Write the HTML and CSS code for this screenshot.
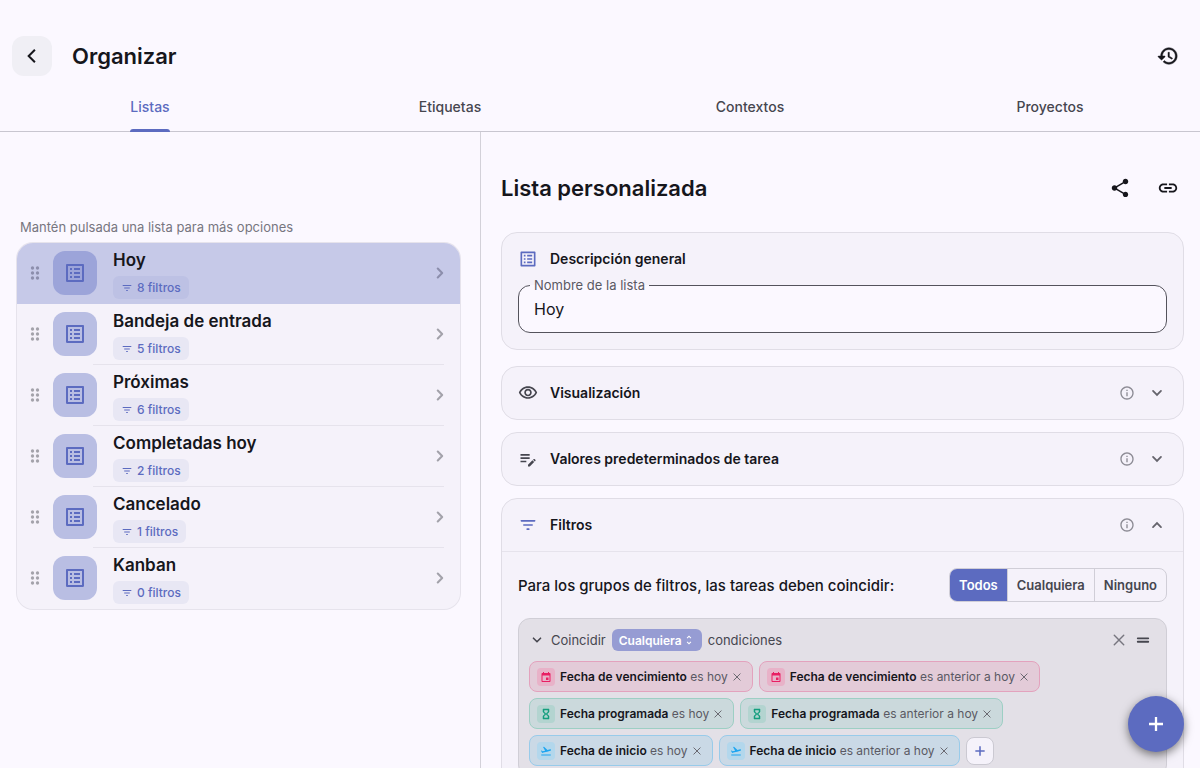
FILE: index.html
```html
<!DOCTYPE html>
<html lang="es">
<head>
    <meta charset="UTF-8">
    <meta name="viewport" content="width=device-width, initial-scale=1.0">
    <title>Organizar</title>
    <link rel="stylesheet" href="styles.css">
</head>
<body>
    <svg class="sprite" aria-hidden="true">
        <symbol id="i-back" viewBox="0 0 24 24"><path d="M15.500 4.500L8 12l7.500 7.500" fill="none" stroke="currentColor" stroke-width="2.400"/></symbol>
        <symbol id="i-history" viewBox="0 0 24 24"><path stroke="currentColor" stroke-width=".500" d="M13 3c-4.970 0-9 4.030-9 9H1.800c-.600 0-.900.600-.500 1l3.300 3.200c.250.250.600.250.800 0L8.700 13c.400-.400.100-1-.400-1H6c0-3.870 3.130-7 7-7s7 3.130 7 7-3.130 7-7 7c-1.930 0-3.680-.790-4.940-2.060l-1.420 1.420C8.270 19.990 10.510 21 13 21c4.970 0 9-4.030 9-9s-4.030-9-9-9zm-1 5v5l4.280 2.540.720-1.210-3.500-2.080V8H12z"/></symbol>
        <symbol id="i-list" viewBox="0 0 24 24"><path d="M11 7h6v2h-6zm0 4h6v2h-6zm0 4h6v2h-6zM7 7h2v2H7zm0 4h2v2H7zm0 4h2v2H7zM20.100 3H3.900c-.500 0-.900.400-.900.900v16.200c0 .400.400.900.900.900h16.200c.400 0 .900-.500.900-.900V3.900c0-.500-.500-.900-.900-.900zM19 19H5V5h14v14z"/></symbol>
        <symbol id="i-drag" viewBox="0 0 24 24"><circle cx="9" cy="6" r="2"/><circle cx="15" cy="6" r="2"/><circle cx="9" cy="12" r="2"/><circle cx="15" cy="12" r="2"/><circle cx="9" cy="18" r="2"/><circle cx="15" cy="18" r="2"/></symbol>
        <symbol id="i-filter" viewBox="0 0 24 24"><path d="M11 18h2c.550 0 1-.450 1-1s-.450-1-1-1h-2c-.550 0-1 .450-1 1s.450 1 1 1zM3 7c0 .550.450 1 1 1h16c.550 0 1-.450 1-1s-.450-1-1-1H4c-.550 0-1 .450-1 1zm4 6h10c.550 0 1-.450 1-1s-.450-1-1-1H7c-.550 0-1 .450-1 1s.450 1 1 1z"/></symbol>
        <symbol id="i-next" viewBox="0 0 24 24"><path d="M9.300 6.700L14.600 12l-5.300 5.300" fill="none" stroke="currentColor" stroke-width="2.500" stroke-linecap="round" stroke-linejoin="round"/></symbol>
        <symbol id="i-share" viewBox="0 0 24 24"><path d="M18 16.080c-.760 0-1.440.300-1.960.770L8.910 12.700c.050-.230.090-.460.090-.700s-.040-.470-.090-.700l7.050-4.110c.540.500 1.250.810 2.040.810 1.660 0 3-1.340 3-3s-1.340-3-3-3-3 1.340-3 3c0 .240.040.470.090.700L8.040 9.810C7.500 9.310 6.790 9 6 9c-1.660 0-3 1.340-3 3s1.340 3 3 3c.790 0 1.500-.310 2.040-.810l7.120 4.160c-.050.210-.080.430-.080.650 0 1.610 1.310 2.920 2.920 2.920s2.920-1.310 2.920-2.920-1.310-2.920-2.920-2.920z"/></symbol>
        <symbol id="i-link" viewBox="0 0 24 24"><path d="M3.900 12c0-1.710 1.390-3.100 3.100-3.100h4V7H7c-2.760 0-5 2.240-5 5s2.240 5 5 5h4v-1.900H7c-1.710 0-3.100-1.390-3.100-3.100zM8 13h8v-2H8v2zm9-6h-4v1.900h4c1.710 0 3.100 1.390 3.100 3.100s-1.390 3.100-3.100 3.100h-4V17h4c2.760 0 5-2.240 5-5s-2.240-5-5-5z"/></symbol>
        <symbol id="i-eye" viewBox="0 0 24 24"><path d="M12 6c3.790 0 7.170 2.130 8.820 5.500C19.170 14.870 15.790 17 12 17s-7.170-2.130-8.820-5.500C4.830 8.130 8.210 6 12 6m0-2C7 4 2.730 7.110 1 11.500 2.730 15.890 7 19 12 19s9.270-3.110 11-7.500C21.270 7.110 17 4 12 4zm0 5c1.380 0 2.500 1.120 2.500 2.500S13.380 14 12 14s-2.500-1.120-2.500-2.500S10.620 9 12 9m0-2c-2.480 0-4.500 2.020-4.500 4.500S9.520 16 12 16s4.500-2.020 4.500-4.500S14.480 7 12 7z"/></symbol>
        <symbol id="i-note" viewBox="0 0 24 24"><path d="M3 10h11v2H3v-2zm0-2h11V6H3v2zm0 8h7v-2H3v2zm15.010-3.130.710-.710c.390-.390 1.020-.390 1.410 0l.710.710c.390.390.390 1.020 0 1.410l-.710.710-2.120-2.120zm-.710.710-5.300 5.300V21h2.120l5.300-5.300-2.120-2.120z"/></symbol>
        <symbol id="i-info" viewBox="0 0 24 24"><path d="M11 7h2v2h-2zm0 4h2v6h-2zm1-9C6.480 2 2 6.480 2 12s4.480 10 10 10 10-4.480 10-10S17.520 2 12 2zm0 18c-4.410 0-8-3.590-8-8s3.590-8 8-8 8 3.590 8 8-3.590 8-8 8z"/></symbol>
        <symbol id="i-down" viewBox="0 0 24 24"><path d="M6.700 9.300l5.300 5.300 5.300-5.300" fill="none" stroke="currentColor" stroke-width="2.400" stroke-linecap="round"/></symbol>
        <symbol id="i-up" viewBox="0 0 24 24"><path d="M6.700 14.700L12 9.400l5.300 5.300" fill="none" stroke="currentColor" stroke-width="2.400" stroke-linecap="round"/></symbol>
        <symbol id="i-unfold" viewBox="0 0 24 24"><path d="M12 5.830 15.170 9l1.410-1.410L12 3 7.410 7.590 8.830 9 12 5.830zm0 12.340L8.830 15l-1.410 1.410L12 21l4.590-4.590L15.170 15 12 18.170z"/></symbol>
        <symbol id="i-close" viewBox="0 0 24 24"><path d="M5.700 5.700l12.600 12.600M18.300 5.700L5.700 18.300" fill="none" stroke="currentColor" stroke-width="1.900" stroke-linecap="round"/></symbol>
        <symbol id="i-handle" viewBox="0 0 24 24"><path d="M5 9.700h14M5 14.300h14" fill="none" stroke="currentColor" stroke-width="2.400" stroke-linecap="round"/></symbol>
        <symbol id="i-event" viewBox="0 0 24 24"><path d="M19 4h-1V2h-2v2H8V2H6v2H5c-1.110 0-1.990.900-1.990 2L3 20c0 1.100.890 2 2 2h14c1.100 0 2-.900 2-2V6c0-1.100-.900-2-2-2zm0 16H5V9h14v11zM17 13h-5v5h5z"/></symbol>
        <symbol id="i-hourglass" viewBox="0 0 24 24"><path stroke="currentColor" d="M6 2v6h.010L6 8.010 10 12l-4 4 .010.010H6V22h12v-5.990h-.010L18 16l-4-4 4-3.990-.010-.010H18V2H6zm10 14.500V20H8v-3.500l4-4 4 4zm-4-5-4-4V4h8v3.500l-4 4z"/></symbol>
        <symbol id="i-takeoff" viewBox="0 0 24 24"><path d="M2.500 19h19v2h-19v-2zm19.570-9.360c-.210-.800-1.040-1.280-1.840-1.060L14.920 10l-6.900-6.430-1.930.510 4.140 7.170-4.970 1.330-1.970-1.540-1.450.390 2.590 4.490s7.120-1.900 16.570-4.430c.810-.230 1.280-1.050 1.070-1.850z"/></symbol>
        <symbol id="i-plus" viewBox="0 0 24 24"><path d="M12 5v14M5 12h14" fill="none" stroke="currentColor" stroke-width="2.300"/></symbol>
    </svg>

    <div class="app">
        <header class="topbar">
            <button type="button" class="back" aria-label="Atrás"><svg class="icon-20"><use href="#i-back"/></svg></button>
            <h1>Organizar</h1>
            <button type="button" class="icon-btn" aria-label="Historial"><svg class="icon-22"><use href="#i-history"/></svg></button>
        </header>
        <nav class="tabs">
            <a href="#listas" class="active"><span>Listas</span></a>
            <a href="#etiquetas"><span>Etiquetas</span></a>
            <a href="#contextos"><span>Contextos</span></a>
            <a href="#proyectos"><span>Proyectos</span></a>
        </nav>

        <main class="panes">
            <section class="lists">
                <p class="hint">Mantén pulsada una lista para más opciones</p>
                <ul id="listItems"></ul>
            </section>

            <section class="detail">
                <div class="detail-head">
                    <h2>Lista personalizada</h2>
                    <button type="button" class="icon-btn" aria-label="Compartir"><svg class="icon-22"><use href="#i-share"/></svg></button>
                    <button type="button" class="icon-btn" aria-label="Copiar enlace"><svg class="icon-22"><use href="#i-link"/></svg></button>
                </div>

                <div class="card overview">
                    <div class="card-head">
                        <svg class="icon-20 accent"><use href="#i-list"/></svg>
                        <h3>Descripción general</h3>
                    </div>
                    <fieldset class="field">
                        <legend><label for="listName">Nombre de la lista</label></legend>
                        <input type="text" id="listName" value="Hoy">
                    </fieldset>
                </div>

                <div class="card">
                    <div class="card-head">
                        <svg class="icon-20"><use href="#i-eye"/></svg>
                        <h3>Visualización</h3>
                        <button type="button" class="mini info" aria-label="Información"><svg class="icon-16"><use href="#i-info"/></svg></button>
                        <button type="button" class="mini" aria-label="Expandir"><svg class="icon-18"><use href="#i-down"/></svg></button>
                    </div>
                </div>

                <div class="card">
                    <div class="card-head">
                        <svg class="icon-20"><use href="#i-note"/></svg>
                        <h3>Valores predeterminados de tarea</h3>
                        <button type="button" class="mini info" aria-label="Información"><svg class="icon-16"><use href="#i-info"/></svg></button>
                        <button type="button" class="mini" aria-label="Expandir"><svg class="icon-18"><use href="#i-down"/></svg></button>
                    </div>
                </div>

                <div class="card">
                    <div class="card-head">
                        <svg class="icon-20 accent"><use href="#i-filter"/></svg>
                        <h3>Filtros</h3>
                        <button type="button" class="mini info" aria-label="Información"><svg class="icon-16"><use href="#i-info"/></svg></button>
                        <button type="button" class="mini" aria-label="Contraer"><svg class="icon-18"><use href="#i-up"/></svg></button>
                    </div>
                    <div class="filters">
                        <div class="match">
                            <p>Para los grupos de filtros, las tareas deben coincidir:</p>
                            <div class="segmented">
                                <label><input type="radio" name="match" checked><span>Todos</span></label>
                                <label><input type="radio" name="match"><span>Cualquiera</span></label>
                                <label><input type="radio" name="match"><span>Ninguno</span></label>
                            </div>
                        </div>
                        <div class="group">
                            <div class="group-head">
                                <button type="button" class="plain" aria-label="Contraer grupo"><svg class="icon-16"><use href="#i-down"/></svg></button>
                                <label for="groupMatch">Coincidir</label>
                                <span class="select">
                                    <select id="groupMatch">
                                        <option>Cualquiera</option>
                                        <option>Todas</option>
                                        <option>Ninguna</option>
                                    </select>
                                    <svg class="icon-12"><use href="#i-unfold"/></svg>
                                </span>
                                <span class="grow">condiciones</span>
                                <button type="button" class="plain soft" aria-label="Eliminar grupo"><svg class="icon-18"><use href="#i-close"/></svg></button>
                                <button type="button" class="plain" aria-label="Mover grupo"><svg class="icon-18"><use href="#i-handle"/></svg></button>
                            </div>
                            <div class="chips" id="chips">
                                <button type="button" class="add" aria-label="Añadir condición"><svg class="icon-16"><use href="#i-plus"/></svg></button>
                            </div>
                        </div>
                    </div>
                </div>
            </section>
        </main>

        <button type="button" class="fab" aria-label="Añadir"><svg class="icon-24"><use href="#i-plus"/></svg></button>
    </div>

    <script>
        const lists = [
            { name: 'Hoy', filters: 8, selected: true },
            { name: 'Bandeja de entrada', filters: 5 },
            { name: 'Próximas', filters: 6 },
            { name: 'Completadas hoy', filters: 2 },
            { name: 'Cancelado', filters: 1 },
            { name: 'Kanban', filters: 0 }
        ];

        const conditions = [
            { type: 'due', icon: 'event', field: 'Fecha de vencimiento', rule: 'es hoy' },
            { type: 'due', icon: 'event', field: 'Fecha de vencimiento', rule: 'es anterior a hoy' },
            { type: 'planned', icon: 'hourglass', field: 'Fecha programada', rule: 'es hoy' },
            { type: 'planned', icon: 'hourglass', field: 'Fecha programada', rule: 'es anterior a hoy' },
            { type: 'start', icon: 'takeoff', field: 'Fecha de inicio', rule: 'es hoy' },
            { type: 'start', icon: 'takeoff', field: 'Fecha de inicio', rule: 'es anterior a hoy' }
        ];

        document.getElementById('listItems').innerHTML = lists.map(list => `
            <li class="${list.selected ? 'selected' : ''}">
                <svg class="icon-20 drag"><use href="#i-drag"/></svg>
                <span class="tile"><svg class="icon-24"><use href="#i-list"/></svg></span>
                <a href="#listas" class="list-text">
                    <span class="name">${list.name}</span>
                    <span class="badge"><svg class="icon-12"><use href="#i-filter"/></svg>${list.filters} filtros</span>
                </a>
                <svg class="icon-20 next"><use href="#i-next"/></svg>
            </li>
        `).join('');

        document.getElementById('chips').insertAdjacentHTML('afterbegin', conditions.map(item => `
            <span class="chip ${item.type}">
                <span class="chip-icon"><svg class="icon-12"><use href="#i-${item.icon}"/></svg></span>
                <span><b>${item.field}</b> ${item.rule}</span>
                <button type="button" class="plain" aria-label="Quitar"><svg class="icon-12"><use href="#i-close"/></svg></button>
            </span>
        `).join(''));
    </script>
</body>
</html>
```
FILE: styles.css
```css
* {
    box-sizing: border-box;
}
body {
    margin: 0;
    font-family: Inter, "Liberation Sans", sans-serif;
    font-size: 14px;
    color: #16161c;
    background-color: #fbf8ff;
}
h1, h2, h3, p, ul {
    margin: 0;
    padding: 0;
}
button, input, select {
    font: inherit;
    color: inherit;
}
button {
    display: flex;
    align-items: center;
    justify-content: center;
    flex: none;
    padding: 0;
    border: none;
    background: none;
    cursor: pointer;
}
a {
    color: inherit;
    text-decoration: none;
}
svg {
    fill: currentColor;
    flex: none;
    display: block;
}
.sprite {
    display: none;
}
.icon-12 { width: 12px; height: 12px; }
.icon-16 { width: 16px; height: 16px; }
.icon-18 { width: 18px; height: 18px; }
.icon-20 { width: 20px; height: 20px; }
.icon-22 { width: 22px; height: 22px; }
.icon-24 { width: 24px; height: 24px; }

.app {
    display: flex;
    flex-direction: column;
    height: 100vh;
}
.topbar {
    display: flex;
    align-items: center;
    gap: 20px;
    padding: 32px 8px 0 12px;
}
.topbar h1, .detail-head h2 {
    flex: 1;
    font-size: 22px;
    font-weight: 600;
    line-height: 28px;
}
.back {
    width: 40px;
    height: 40px;
    border-radius: 12px;
    background-color: #f0eff5;
}
.icon-btn {
    width: 48px;
    height: 48px;
}
.tabs {
    display: flex;
    height: 52px;
    border-bottom: 1px solid #c8c6d0;
}
.tabs a {
    flex: 1;
    display: flex;
    justify-content: center;
    font-weight: 500;
    line-height: 20px;
    color: #46464f;
}
.tabs span {
    position: relative;
    padding-top: 17px;
}
.tabs .active {
    color: #5c6bc0;
}
.tabs .active span::after {
    content: "";
    position: absolute;
    left: 0;
    right: 0;
    bottom: -1px;
    height: 3px;
    border-radius: 3px 3px 0 0;
    background-color: #5c6bc0;
}
.panes {
    flex: 1;
    display: flex;
    min-height: 0;
}

/* left pane */
.lists {
    flex: 0 0 40%;
    padding: 86px 20px 16px 17px;
}
.hint {
    padding: 0 3px 7px;
    font-size: 13px;
    line-height: 18px;
    color: #77767f;
}
.lists ul {
    list-style: none;
    border-radius: 16px;
    background-color: #f5f2fa;
    box-shadow: 0 0 0 1px #e6e3ec;
    overflow: hidden;
}
.lists li {
    position: relative;
    display: flex;
    align-items: center;
    height: 61px;
    padding: 0 10px 1px 8px;
}
.lists li:not(:last-child):not(.selected)::after {
    content: "";
    position: absolute;
    left: 76px;
    right: 16px;
    bottom: 0;
    height: 1px;
    background-color: #e6e3ec;
}
.lists .selected {
    background-color: #c6c9e8;
}
.drag {
    color: #a3a2aa;
}
.next {
    color: #a3a2aa;
}
.selected .drag, .selected .next {
    color: #8c8eac;
}
.tile {
    display: flex;
    align-items: center;
    justify-content: center;
    width: 44px;
    height: 44px;
    margin: 0 16px 0 8px;
    border-radius: 12px;
    background-color: #b9bee3;
    color: #5c6bc0;
}
.selected .tile {
    background-color: #9ca4d9;
}
.list-text {
    flex: 1;
    display: flex;
    flex-direction: column;
    align-self: flex-start;
    align-items: flex-start;
    gap: 6px;
    padding-top: 7px;
}
.name {
    font-size: 17px;
    font-weight: 600;
    line-height: 20px;
}
.badge {
    display: flex;
    align-items: center;
    gap: 4px;
    height: 23px;
    padding: 0 8px;
    border-radius: 6px;
    background-color: #e8e7f4;
    color: #5c6bc0;
    font-size: 12px;
    font-weight: 500;
}
.selected .badge {
    background-color: #bdc1e4;
}

/* right pane */
.detail {
    flex: 1;
    min-width: 0;
    padding: 32px 16px 16px 20px;
    border-left: 1px solid #d3d1d9;
    overflow-y: auto;
    scrollbar-width: none;
}
.detail-head {
    display: flex;
    align-items: center;
    margin: 0 -8px 20px 0;
}
.card {
    margin-bottom: 12px;
    border: 1px solid #e0dde6;
    border-radius: 16px;
    background-color: #f5f2fa;
}
.overview {
    margin-bottom: 16px;
    padding-bottom: 16px;
}
.card-head {
    display: flex;
    align-items: center;
    height: 52px;
    padding: 0 11px 0 16px;
    color: #46464f;
}
.card-head .accent {
    color: #5c6bc0;
}
.card-head h3 {
    flex: 1;
    margin-left: 12px;
    font-size: 14px;
    font-weight: 600;
    line-height: 20px;
    color: #16161c;
}
.mini {
    width: 30px;
    height: 30px;
    color: #65646c;
}
.mini.info {
    color: #8c8b94;
}
.overview .card-head {
    height: 44px;
    padding-top: 8px;
}
.field {
    min-width: 0;
    margin: 0 16px;
    padding: 0 11px;
    border: 1px solid #54535c;
    border-radius: 12px;
    background-color: #fbf8ff;
}
.field legend {
    padding: 0 4px;
    line-height: 16px;
    font-size: 13px;
    color: #5a5963;
}
.field input {
    display: block;
    width: 100%;
    height: 39px;
    padding: 0 4px 8px;
    border: none;
    outline: none;
    background: none;
    font-size: 16px;
}
.filters {
    padding: 16px;
    border-top: 1px solid #e6e3ec;
}
.match {
    display: flex;
    align-items: center;
    justify-content: space-between;
    margin-bottom: 16px;
}
.match p {
    font-size: 15px;
    font-weight: 500;
}
.segmented {
    display: flex;
    height: 34px;
    border: 1px solid #d0ced7;
    border-radius: 8px;
    overflow: hidden;
}
.segmented label {
    position: relative;
    display: flex;
    cursor: pointer;
}
.segmented input {
    position: absolute;
    inset: 0;
    margin: 0;
    opacity: 0;
}
.segmented span {
    display: flex;
    align-items: center;
    padding: 0 9px;
    font-size: 13px;
    font-weight: 600;
    color: #46464f;
}
.segmented label + label {
    border-left: 1px solid #d0ced7;
}
.segmented input:checked + span {
    background-color: #5c6bc0;
    color: #fff;
}
.group {
    padding: 10px;
    border: 1px solid #d0ced6;
    border-radius: 12px;
    background-color: #e3e0e7;
}
.group-head {
    display: flex;
    align-items: center;
    gap: 6px;
    height: 22px;
    margin-bottom: 10px;
    padding-right: 4px;
    font-size: 13px;
    color: #46464f;
}
.group-head .grow {
    flex: 1;
}
.plain.soft {
    color: #77767f;
}
.select {
    display: grid;
    align-items: center;
}
.select > * {
    grid-area: 1 / 1;
}
.select select {
    height: 22px;
    padding: 0 20px 0 7px;
    border: none;
    border-radius: 6px;
    appearance: none;
    background-color: #969cd3;
    color: #fff;
    font-size: 12px;
    font-weight: 600;
}
.select svg {
    justify-self: end;
    margin-right: 7px;
    color: #fff;
    pointer-events: none;
}
.chips {
    display: flex;
    flex-wrap: wrap;
    align-items: center;
    gap: 6px;
}
.chip {
    display: flex;
    align-items: center;
    height: 31px;
    padding: 0 9px 0 7px;
    border: 1px solid;
    border-radius: 8px;
    font-size: 12px;
    color: #5a5963;
}
.chip b {
    font-weight: 600;
    color: #16161c;
}
.chip-icon {
    padding: 3px;
    margin-right: 5px;
    border-radius: 4px;
}
.chip .plain {
    margin-left: 3px;
    color: #65646c;
}
.due {
    background-color: #e3cbd8;
    border-color: #e3a2bd;
}
.due .chip-icon {
    background-color: #e8b2c8;
    color: #e91e63;
}
.planned {
    background-color: #cbd9dc;
    border-color: #9dcfc4;
}
.planned .chip-icon {
    background-color: #b3d4d0;
    color: #159f7f;
}
.start {
    background-color: #cad9e6;
    border-color: #98cbea;
}
.start .chip-icon {
    background-color: #b3d7ec;
    color: #1ea5f0;
}
.add {
    width: 28px;
    height: 28px;
    border: 1px solid #cbc9d2;
    border-radius: 8px;
    background-color: #f5f2fa;
    color: #5c6bc0;
}

.fab {
    position: fixed;
    right: 16px;
    bottom: 16px;
    width: 56px;
    height: 56px;
    border-radius: 50%;
    background-color: #5c6bc0;
    color: #fff;
    box-shadow: 0 3px 10px rgba(0, 0, 0, 0.5);
}
```
